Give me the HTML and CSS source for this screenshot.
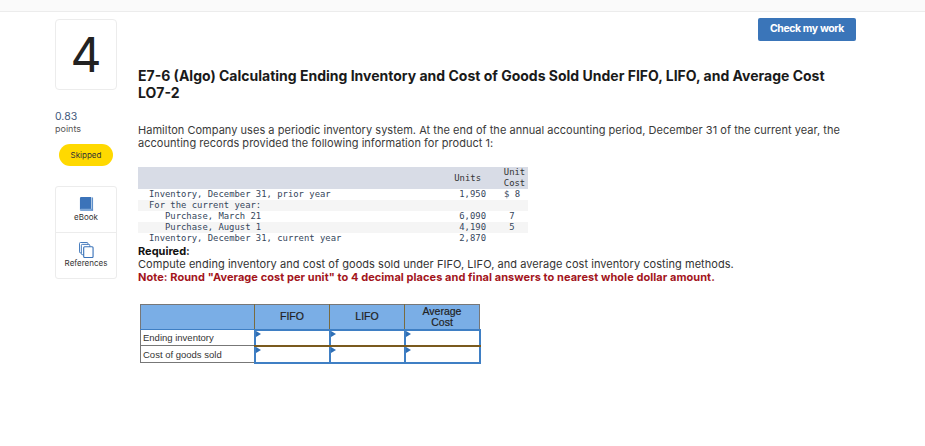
FILE: index.html
```html
<!DOCTYPE html>
<html lang="en">
<head>
<meta charset="utf-8">
<title>E7-6 (Algo)</title>
<link rel="stylesheet" href="styles.css">
</head>
<body>
<div class="topbar"></div>
<div class="page">
  <aside class="side">
    <div class="qnum">4</div>
    <div class="score">0.83</div>
    <div class="points">points</div>
    <div class="badge">Skipped</div>
    <div class="tools">
      <div class="tool tool-book">
        <svg class="ic" width="15" height="16" viewBox="0 0 16 17"><path d="M1 2.500C1 1.500 1.700 1 2.500 1H13v13H2.500C1.700 14 1 14.500 1 15z" fill="#3b73b9"/><path d="M1 15c0-1 .7-1.500 1.500-1.500H15V16H2.500C1.700 16 1 15.800 1 15z" fill="#7fa8d8"/><path d="M13.500 1.500H15v14h-1.500z" fill="#5e8fca"/></svg>
        <span>eBook</span>
      </div>
      <div class="tool">
        <svg class="ic" width="15" height="16" viewBox="0 0 16 17" fill="#fff" stroke="#3b73b9"><rect x=".5" y=".5" width="9" height="11" rx="1"/><rect x="2.500" y="2.500" width="9" height="11" rx="1"/><rect x="5" y="5" width="10" height="11.500" rx="1" stroke-width="1.200"/></svg>
        <span>References</span>
      </div>
    </div>
  </aside>
  <main class="main">
    <div class="actions"><button class="check">Check my work</button></div>
    <h1 class="title">E7-6 (Algo) Calculating Ending Inventory and Cost of Goods Sold Under FIFO, LIFO, and Average Cost LO7-2</h1>
    <p class="intro">Hamilton Company uses a periodic inventory system. At the end of the annual accounting period, December 31 of the current year, the accounting records provided the following information for product 1:</p>
    <table class="data">
      <colgroup><col class="c-label"><col class="c-units"><col class="c-gap"><col class="c-cost"></colgroup>
      <thead><tr><th></th><th class="num head-units">Units</th><th></th><th class="ctr">Unit<br>Cost</th></tr></thead>
      <tbody>
        <tr><td class="l1">Inventory, December 31, prior year</td><td class="num">1,950</td><td></td><td class="ctr cost">$ 8</td></tr>
        <tr class="alt"><td class="l1">For the current year:</td><td></td><td></td><td></td></tr>
        <tr><td class="l2">Purchase, March 21</td><td class="num">6,090</td><td></td><td class="ctr cost">7</td></tr>
        <tr class="alt"><td class="l2">Purchase, August 1</td><td class="num">4,190</td><td></td><td class="ctr cost">5</td></tr>
        <tr><td class="l1">Inventory, December 31, current year</td><td class="num">2,870</td><td></td><td></td></tr>
      </tbody>
    </table>
    <p class="req">Required:</p>
    <p class="task">Compute ending inventory and cost of goods sold under FIFO, LIFO, and average cost inventory costing methods.</p>
    <p class="note">Note: Round "Average cost per unit" to 4 decimal places and final answers to nearest whole dollar amount.</p>
    <table class="answer">
      <thead><tr><th class="blank"></th><th>FIFO</th><th>LIFO</th><th>Average<br>Cost</th></tr></thead>
      <tbody>
        <tr class="r1"><td class="name">Ending inventory</td><td class="cell"></td><td class="cell"></td><td class="cell"></td></tr>
        <tr class="r2"><td class="name">Cost of goods sold</td><td class="cell"></td><td class="cell"></td><td class="cell"></td></tr>
      </tbody>
    </table>
  </main>
</div>
</body>
</html>
```
FILE: styles.css
```css
* { box-sizing: border-box; }
html, body { margin: 0; padding: 0; background: #fff; }
body { width: 925px; height: 446px; overflow: hidden; font-family: "Inter", "Liberation Sans", sans-serif; color: #2d2d2d; }
.topbar { height: 12px; background: #fafafa; border-bottom: 1px solid #ececec; }
.page { display: flex; padding-left: 55px; }
.side { width: 83px; flex: none; }
.qnum { width: 62px; height: 71px; margin-top: 7px; border: 1px solid #ececec; border-radius: 4px; display: flex; align-items: center; justify-content: center; font-size: 48px; font-weight: 400; color: #222; line-height: 1; }
.score { margin-top: 20px; font-size: 10.500px; line-height: 14px; color: #3f5a7d; }
.points { font-size: 9px; line-height: 10px; color: #555; }
.badge { width: 54px; height: 22px; margin: 10px 0 0 4px; background: #ffd900; border-radius: 11px; font-size: 8px; line-height: 22px; text-align: center; color: #333; }
.tools { width: 62px; height: 93px; margin-top: 20px; border: 1px solid #ececec; border-radius: 3px; display: flex; flex-direction: column; }
.tool { flex: 1; display: flex; flex-direction: column; align-items: center; padding-top: 9px; font-size: 8px; line-height: 10px; color: #333; }
.tool-book { border-bottom: 1px solid #ececec; }
.ic { margin-bottom: 0; }
.main { width: 718px; flex: none; }
.actions { display: flex; justify-content: flex-end; padding-top: 6px; }
.check { width: 98px; height: 23px; border: 0; border-radius: 2px; background: #3a75b9; color: #fff; font: 700 10.500px/21px "Inter", "Liberation Sans", sans-serif; letter-spacing: -.4px; padding: 0 0 2px; }
.title { margin: 26px 0 0; width: 700px; font-size: 14px; line-height: 17px; font-weight: 700; color: #1a1a1a; }
.intro { margin: 23px 0 0; width: 712px; font-size: 11px; line-height: 13px; letter-spacing: .03px; color: #3a3a3a; }
.data { margin-top: 17px; width: 390px; border-collapse: collapse; table-layout: fixed; font: 8.900px/11px "DejaVu Sans Mono", "Liberation Mono", monospace; color: #35465c; }
.c-label { width: 296px; }
.c-units { width: 52px; }
.c-gap { width: 15px; }
.c-cost { width: 27px; }
.data th { background: #d8dce6; height: 22px; padding: 0; font-weight: 400; color: #333; }
.data td { height: 11px; padding: 0; white-space: nowrap; }
.data .head-units { padding-right: 5px; }
.data .cost { padding-right: 5px; }
.alt td { background: #f5f5f5; }
.l1 { padding-left: 11px !important; }
.l2 { padding-left: 27px !important; }
.num { text-align: right; }
.ctr { text-align: center; }
.req, .task, .note { margin: 0; width: 700px; line-height: 13px; }
.req { font-size: 11px; font-weight: 700; color: #111; margin-top: 1px; }
.task { font-size: 11px; letter-spacing: .05px; color: #333; }
.note { font-size: 11px; letter-spacing: .06px; font-weight: 700; color: #a3151c; }
.answer { margin: 20px 0 0 2px; width: 339px; border-collapse: collapse; table-layout: fixed; font-family: "Liberation Sans", sans-serif; }
.answer th { height: 25px; width: 75px; background: #7aaee6; border: 1px solid #7a6b3f; border-top-color: #777; border-bottom-color: #3f7fc4; font-size: 10.500px; line-height: 11px; font-weight: 400; color: #222; -webkit-text-stroke: .2px #222; padding: 0; }
.answer th.blank { width: 114px; border-left-color: #777; }
.answer th:last-child { border-right-color: #777; }
.name { height: 16px; padding: 0 0 0 2px; border: 1px solid #777; font-size: 9.500px; color: #333; }
.r2 .name { height: 17px; }
.cell { position: relative; border: 2px solid #3f7fc4; padding: 0; }
.r1 .cell { border-bottom: 2px solid #7a5a1e; }
.r2 .cell { border-top: 1px solid #7a5a1e; }
.cell::before { content: ""; position: absolute; left: 0; top: 0; border-left: 5px solid #2f6fb5; border-top: 3px solid transparent; border-bottom: 3px solid transparent; }
```
